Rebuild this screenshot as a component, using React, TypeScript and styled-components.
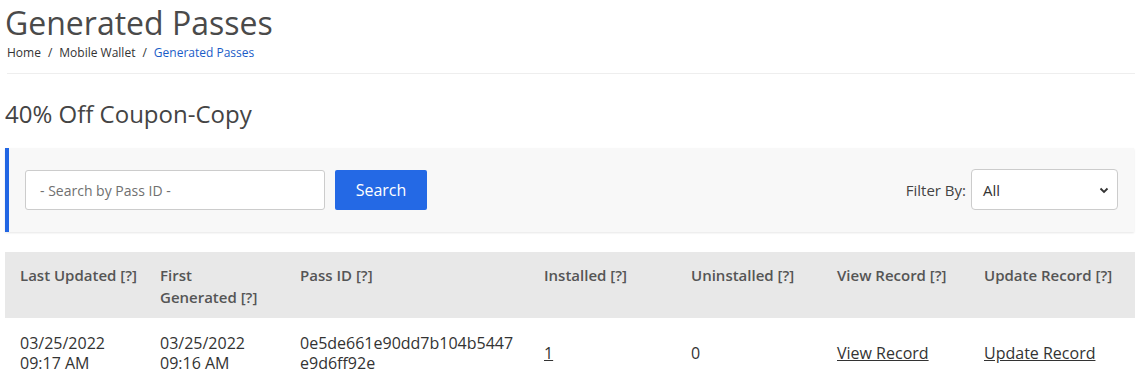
import React from 'react';
import styled, { createGlobalStyle } from 'styled-components';

const GlobalStyle = createGlobalStyle`
  body {
    margin: 0;
    background: #fff;
    font-family: "Open Sans", "Liberation Sans", sans-serif;
    color: #444;
  }
`;

const Page = styled.div`
  padding: 0 3px 0 5px;
`;

const Title = styled.h1`
  margin: 0;
  padding-top: 3px;
  font-size: 32px;
  font-weight: 400;
  line-height: 40px;
  color: #4a4a4a;
`;

const Crumbs = styled.nav`
  display: flex;
  align-items: center;
  gap: 7px;
  margin: 1px 0 0 2px;
  font-size: 12px;
  line-height: 18px;
  color: #333;
  padding-bottom: 11px;
  border-bottom: 1px solid #eee;
`;

const Crumb = styled.span<{ $active?: boolean }>`
  color: ${(p) => (p.$active ? '#1a5cc7' : '#333')};
`;

const Subtitle = styled.h2`
  margin: 24px 0 0;
  font-size: 24px;
  font-weight: 400;
  line-height: 32px;
  color: #444;
`;

const Panel = styled.div`
  display: flex;
  align-items: center;
  justify-content: space-between;
  margin-top: 18px;
  margin-right: 1px;
  padding: 22px 16px;
  background: #f8f8f8;
  border-left: 4px solid #2266e3;
  box-shadow: 0 1px 2px rgba(0, 0, 0, 0.1);
`;

const SearchGroup = styled.div`
  display: flex;
  gap: 10px;
`;

const SearchInput = styled.input`
  box-sizing: border-box;
  width: 300px;
  height: 40px;
  padding: 0 12px 0 14px;
  border: 1px solid #ccc;
  border-radius: 3px;
  background: #fff;
  font-family: inherit;
  font-size: 14px;
  color: #333;
  &::placeholder {
    color: #707070;
  }
`;

const SearchButton = styled.button`
  width: 92px;
  height: 40px;
  border: 0;
  border-radius: 2px;
  background: #2469e5;
  color: #fff;
  font-family: inherit;
  font-size: 16px;
`;

const FilterGroup = styled.label`
  display: flex;
  align-items: center;
  gap: 5px;
  font-size: 15px;
  color: #444;
`;

const SelectBox = styled.div`
  box-sizing: border-box;
  display: flex;
  align-items: center;
  justify-content: space-between;
  width: 147px;
  height: 41px;
  margin: -1px 0 0;
  padding: 0 8px 0 11px;
  border: 1px solid #ccc;
  border-radius: 4px;
  background: #fff;
  font-size: 15px;
  color: #333;
`;

const Table = styled.table`
  width: calc(100% - 1px);
  margin-top: 20px;
  border-collapse: collapse;
  table-layout: fixed;
`;

const Th = styled.th<{ $w: number }>`
  box-sizing: border-box;
  width: ${(p) => p.$w}px;
  height: 66px;
  padding: 12px 4px 10px 15px;
  background: #e8e8e8;
  text-align: left;
  vertical-align: top;
  font-size: 15px;
  font-weight: 600;
  line-height: 22px;
  color: #555;
`;

const Td = styled.td`
  padding: 15px 12px 13px 15px;
  vertical-align: middle;
  font-size: 16px;
  line-height: 20px;
  color: #333;
  word-break: break-all;
`;

const CellLink = styled.a`
  color: #333;
  text-decoration: underline;
`;

const columns: [React.ReactNode, number][] = [
  ['Last Updated [?]', 140],
  [
    <>
      First
      <br />
      Generated [?]
    </>,
    140,
  ],
  ['Pass ID [?]', 244],
  ['Installed [?]', 147],
  ['Uninstalled [?]', 146],
  ['View Record [?]', 147],
  ['Update Record [?]', 166],
];

export default function App() {
  return (
    <Page>
      <GlobalStyle />
      <Title>Generated Passes</Title>
      <Crumbs>
        <Crumb>Home</Crumb>
        <span>/</span>
        <Crumb>Mobile Wallet</Crumb>
        <span>/</span>
        <Crumb $active>Generated Passes</Crumb>
      </Crumbs>
      <Subtitle>40% Off Coupon-Copy</Subtitle>
      <Panel>
        <SearchGroup>
          <SearchInput placeholder="- Search by Pass ID -" />
          <SearchButton>Search</SearchButton>
        </SearchGroup>
        <FilterGroup>
          Filter By:
          <SelectBox>
            All
            <svg width="10" height="10" viewBox="0 0 10 10">
              <path d="M1.5 3.5 5 7 8.5 3.5" fill="none" stroke="#333" strokeWidth="1.8" />
            </svg>
          </SelectBox>
        </FilterGroup>
      </Panel>
      <Table>
        <thead>
          <tr>
            {columns.map(([label, w], i) => (
              <Th key={i} $w={w}>
                {label}
              </Th>
            ))}
          </tr>
        </thead>
        <tbody>
          <tr>
            <Td>
              03/25/2022
              <br />
              09:17 AM
            </Td>
            <Td>
              03/25/2022
              <br />
              09:16 AM
            </Td>
            <Td>0e5de661e90dd7b104b5447e9d6ff92e</Td>
            <Td>
              <CellLink href="#">1</CellLink>
            </Td>
            <Td>0</Td>
            <Td>
              <CellLink href="#">View Record</CellLink>
            </Td>
            <Td>
              <CellLink href="#">Update Record</CellLink>
            </Td>
          </tr>
        </tbody>
      </Table>
    </Page>
  );
}
